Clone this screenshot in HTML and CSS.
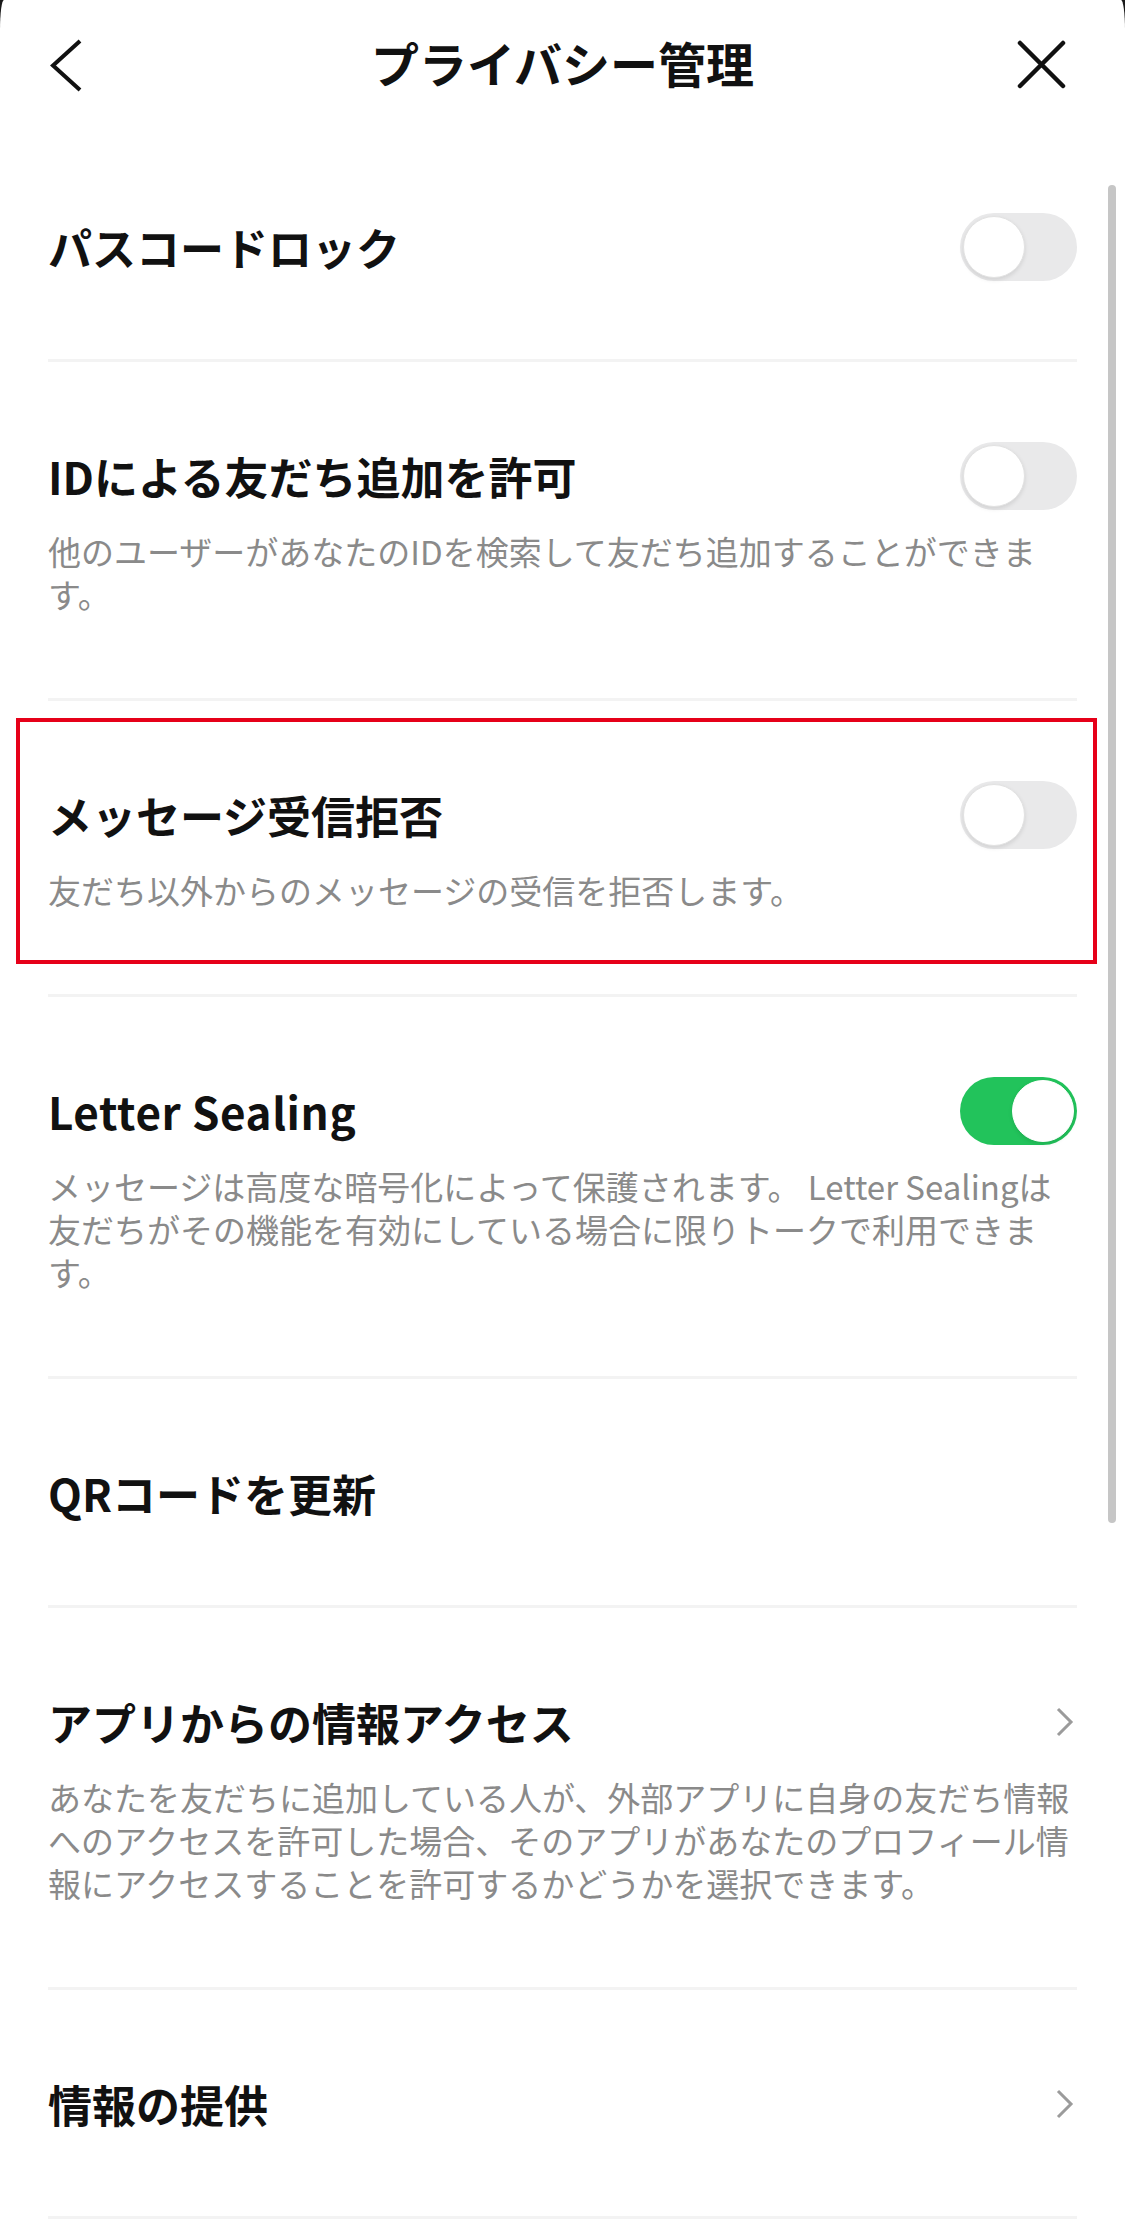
FILE: index.html
```html
<!DOCTYPE html>
<html lang="ja">
<head>
<meta charset="utf-8">
<title>プライバシー管理</title>
<link rel="stylesheet" href="styles.css">
</head>
<body>
<div class="screen">
  <header class="header">
    <svg class="icon-back" width="40" height="60" viewBox="0 0 40 60" aria-hidden="true">
      <path d="M32 6 L5 30.5 L32 55" fill="none" stroke="#111" stroke-width="4"/>
    </svg>
    <h1 class="header-title">プライバシー管理</h1>
    <svg class="icon-close" width="50" height="50" viewBox="0 0 50 50" aria-hidden="true">
      <path d="M4 3 L47 46 M47 3 L4 46" fill="none" stroke="#111" stroke-width="4.5" stroke-linecap="round"/>
    </svg>
  </header>

  <main class="list">
    <section class="row">
      <div class="row-head">
        <span class="row-title">パスコードロック</span>
        <span class="toggle"><span class="knob"></span></span>
      </div>
    </section>

    <section class="row">
      <div class="row-head">
        <span class="row-title">IDによる友だち追加を許可</span>
        <span class="toggle"><span class="knob"></span></span>
      </div>
      <p class="row-desc">他のユーザーがあなたのIDを検索して友だち追加することができます。</p>
    </section>

    <section class="row row-marked">
      <div class="row-head">
        <span class="row-title">メッセージ受信拒否</span>
        <span class="toggle"><span class="knob"></span></span>
      </div>
      <p class="row-desc">友だち以外からのメッセージの受信を拒否します。</p>
      <div class="highlight"></div>
    </section>

    <section class="row">
      <div class="row-head">
        <span class="row-title row-title-latin">Letter Sealing</span>
        <span class="toggle toggle-on"><span class="knob"></span></span>
      </div>
      <p class="row-desc">メッセージは高度な暗号化によって保護されます。 Letter Sealingは友だちがその機能を有効にしている場合に限りトークで利用できます。</p>
    </section>

    <section class="row">
      <div class="row-head">
        <span class="row-title">QRコードを更新</span>
      </div>
    </section>

    <section class="row">
      <div class="row-head">
        <span class="row-title">アプリからの情報アクセス</span>
        <svg class="chevron" width="22" height="32" viewBox="0 0 22 32" aria-hidden="true">
          <path d="M5 3 L18 16 L5 29" fill="none" stroke="#9b9b9b" stroke-width="3"/>
        </svg>
      </div>
      <p class="row-desc">あなたを友だちに追加している人が、外部アプリに自身の友だち情報へのアクセスを許可した場合、そのアプリがあなたのプロフィール情報にアクセスすることを許可するかどうかを選択できます。</p>
    </section>

    <section class="row">
      <div class="row-head">
        <span class="row-title">情報の提供</span>
        <svg class="chevron" width="22" height="32" viewBox="0 0 22 32" aria-hidden="true">
          <path d="M5 3 L18 16 L5 29" fill="none" stroke="#9b9b9b" stroke-width="3"/>
        </svg>
      </div>
    </section>
  </main>

  <div class="scrollbar"></div>
</div>
</body>
</html>
```

FILE: styles.css
```css
html, body {
  margin: 0;
  padding: 0;
  background: #1a1a1a;
}

body {
  font-family: "Noto Sans CJK JP", "Noto Sans", sans-serif;
  color: #111;
}

.screen {
  position: relative;
  width: 1125px;
  min-height: 2236px;
  background: #fff;
  border-top-left-radius: 4px 30px;
  border-top-right-radius: 4px 30px;
  overflow: hidden;
}

.header {
  height: 128px;
  display: grid;
  grid-template-columns: 1fr auto 1fr;
  align-items: center;
}

.icon-back {
  justify-self: start;
  margin-left: 48px;
  margin-top: 2px;
}

.icon-close {
  justify-self: end;
  margin-right: 59px;
  margin-top: 2px;
}

.header-title {
  margin: 0 0 4px;
  font-size: 48px;
  font-weight: 700;
  line-height: 60px;
  letter-spacing: 0;
  color: #111;
}

.list {
  padding-top: 5px;
}

.row {
  position: relative;
  margin: 0 48px;
  padding: 84px 0 82px;
  border-bottom: 3px solid #f3f3f3;
}

.row-head {
  display: flex;
  align-items: center;
  justify-content: space-between;
  height: 60px;
}

.row-title {
  font-size: 44px;
  font-weight: 700;
  line-height: 60px;
  color: #111;
  white-space: nowrap;
}

.row-title-latin {
  letter-spacing: 0.6px;
}

.row-desc {
  margin: 24px 0 0;
  font-size: 33px;
  line-height: 43px;
  color: #8a8a8a;
  font-weight: 400;
}

.toggle {
  flex: none;
  display: flex;
  align-items: center;
  justify-content: flex-start;
  box-sizing: border-box;
  width: 117px;
  height: 68px;
  padding: 0 3px;
  border-radius: 34px;
  background: #e9e9ea;
}

.toggle-on {
  justify-content: flex-end;
  background: #22c35b;
}

.knob {
  display: block;
  box-sizing: border-box;
  width: 62px;
  height: 62px;
  border-radius: 50%;
  background: #fff;
  border: 1px solid #e2e2e2;
  box-shadow: 0 2px 4px rgba(0, 0, 0, 0.10);
}

.toggle-on .knob {
  border-color: #fff;
}

.chevron {
  flex: none;
  margin-right: 2px;
}

.highlight {
  position: absolute;
  top: 17px;
  bottom: 30px;
  left: -32px;
  right: -20px;
  border: 4px solid #e60019;
  pointer-events: none;
}

.scrollbar {
  position: absolute;
  left: 1108px;
  top: 185px;
  width: 8px;
  height: 1338px;
  border-radius: 4px;
  background: #c6c6c6;
}
```
